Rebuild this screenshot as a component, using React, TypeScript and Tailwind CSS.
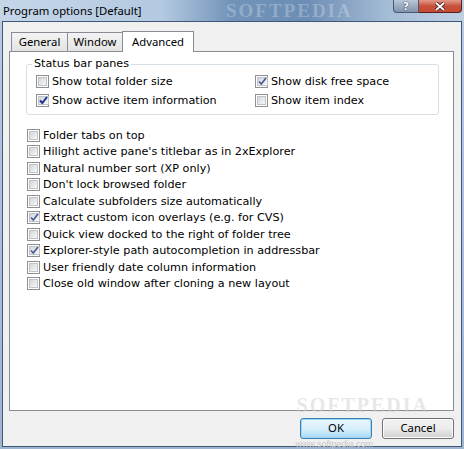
const mainFont = "font-['DejaVu_Sans',sans-serif]";

const Check = ({ checked, strong }: { checked?: boolean; strong?: boolean }) => {
  return (
    <span className="w-[13px] h-[13px] shrink-0 border border-[#8e8f8f] bg-white p-[1px] flex">
      <span className="flex-1 border border-[#c0c4ca] bg-gradient-to-br from-[#d3d6da] to-[#f8f8f8] flex items-center justify-center">
        {checked && (
          <svg width="9" height="9" viewBox="0 0 9 9">
            <path
              d="M1 4.5 L3.3 7 L8 1"
              fill="none"
              stroke={strong ? '#1f2f9a' : '#4a5c95'}
              strokeWidth={strong ? 2 : 1.7}
            />
          </svg>
        )}
      </span>
    </span>
  );
};

const Option = ({ label, checked, strong }: { label: string; checked?: boolean; strong?: boolean }) => {
  return (
    <div className="flex items-center gap-[3px] h-[16.5px]">
      <Check checked={checked} strong={strong} />
      <span className="text-[11.2px] leading-none text-black whitespace-nowrap">{label}</span>
    </div>
  );
};

const options = [
  { label: 'Folder tabs on top' },
  { label: "Hilight active pane's titlebar as in 2xExplorer" },
  { label: 'Natural number sort (XP only)' },
  { label: "Don't lock browsed folder" },
  { label: 'Calculate subfolders size automatically' },
  { label: 'Extract custom icon overlays (e.g. for CVS)', checked: true },
  { label: 'Quick view docked to the right of folder tree' },
  { label: 'Explorer-style path autocompletion in addressbar', checked: true },
  { label: 'User friendly date column information' },
  { label: 'Close old window after cloning a new layout' },
];

const App = () => {
  return (
    <div className="w-[464px] h-[449px] overflow-hidden flex flex-col bg-gradient-to-b from-[#b8cce2] to-[#9db5d0]">
      {/* title bar */}
      <div className="h-[21px] shrink-0 relative flex items-center pl-[3px] bg-[linear-gradient(to_right,#c5d6e9_0%,#b3c9e0_35%,#7193b9_50%,#6c8db4_66%,#a6bdd7_84%,#bfd0e3_100%)]">
        <span className="absolute left-[226px] top-[1px] text-[19px] leading-[19px] font-bold tracking-[2px] text-white/25 font-['Liberation_Serif',serif]">
          SOFTPEDIA
        </span>
        <span className="relative text-[11.3px] text-black font-['Noto_Sans',sans-serif] leading-none">
          Program options [Default]
        </span>
        <div className="absolute top-0 right-[2px] flex">
          <div className="w-[26px] h-[13px] rounded-bl-[4px] border border-t-0 border-[#4a5a6f] bg-gradient-to-b from-[#b9c7d8] to-[#7f94ad] flex items-center justify-center">
            <span className="text-[11px] font-bold leading-none text-white font-['DejaVu_Sans',sans-serif] [text-shadow:0_0_1px_#1c2a3c,0_0_1px_#1c2a3c]">?</span>
          </div>
          <div className="w-[43px] h-[13px] rounded-br-[4px] border border-t-0 border-l-0 border-[#5a2020] bg-gradient-to-b from-[#e29b8a] via-[#c7503c] to-[#c84a33] flex items-center justify-center">
            <svg width="12" height="9" viewBox="0 0 12 9">
              <path d="M2 1 L10 8 M10 1 L2 8" stroke="#3b1510" strokeWidth="3.6" />
              <path d="M2 1 L10 8 M10 1 L2 8" stroke="#ffffff" strokeWidth="2" />
            </svg>
          </div>
        </div>
      </div>

      {/* client area */}
      <div className={`flex-1 mx-[2px] mb-[2px] border border-[#3f5877] bg-[#f0f0f0] flex flex-col ${mainFont}`}>
        {/* tabs */}
        <div className="pt-[8px] pl-[8px] flex items-end h-[29px] font-['Noto_Sans',sans-serif] text-[11.3px]">
          <div className="h-[19px] w-[57px] border border-b-0 border-[#898c95] bg-gradient-to-b from-[#f3f3f3] to-[#e4e4e4] flex items-center justify-center">
            General
          </div>
          <div className="h-[19px] w-[55px] border border-b-0 border-l-0 border-[#898c95] bg-gradient-to-b from-[#f3f3f3] to-[#e4e4e4] flex items-center justify-center">
            Window
          </div>
          <div className="h-[21px] w-[72px] -ml-[1px] -mb-[1px] relative z-10 border border-b-0 border-[#898c95] bg-white flex items-start justify-center pt-[2px]">
            Advanced
          </div>
        </div>

        {/* panel */}
        <div className="ml-[6px] w-[445px] h-[360px] border border-[#898c95] bg-white pt-[12px]">
          <div className="relative ml-[16px] w-[413px] h-[51px] border border-[#d5dfe5] rounded-[3px] pt-[7px] pl-[9px]">
            <span className="absolute -top-[7px] left-[5px] px-[2px] bg-white text-[11.2px] leading-none">
              Status bar panes
            </span>
            <div className="grid grid-cols-[219px_1fr]">
              <div className="h-[19px] flex items-center">
                <Option label="Show total folder size" />
              </div>
              <div className="h-[19px] flex items-center">
                <Option label="Show disk free space" checked />
              </div>
              <div className="h-[19px] flex items-center">
                <Option label="Show active item information" checked strong />
              </div>
              <div className="h-[19px] flex items-center">
                <Option label="Show item index" />
              </div>
            </div>
          </div>

          <div className="ml-[17px] mt-[12px] flex flex-col">
            {options.map((o) => (
              <Option key={o.label} label={o.label} checked={o.checked} />
            ))}
          </div>
        </div>

        {/* buttons */}
        <div className="relative flex justify-end gap-[10px] pr-[7px] pt-[7px] font-['Noto_Sans',sans-serif] text-[11.3px]">
          <span className="absolute right-[32px] -top-[16px] text-[20px] font-bold tracking-[2px] text-[#d0d0d0]/50 font-['Liberation_Serif',serif] leading-none">
            SOFTPEDIA
          </span>
          <div className="relative w-[72px] h-[21px] rounded-[3px] border border-[#3c7fb1] bg-gradient-to-b from-[#eaf6fd] via-[#d9f0fc] to-[#a7d9f5] shadow-[inset_0_0_0_1px_#9ad6f5] flex items-center justify-center text-black">
            OK
          </div>
          <div className="relative w-[72px] h-[21px] rounded-[3px] border border-[#707070] bg-gradient-to-b from-[#f2f2f2] via-[#ebebeb] to-[#cfcfcf] shadow-[inset_0_0_0_1px_#fcfcfc] flex items-center justify-center text-black">
            Cancel
          </div>
          <span className="absolute right-[88px] top-[29px] text-[9px] leading-none text-[#c8c8c8] font-['Liberation_Sans',sans-serif]">
            www.softpedia.com
          </span>
        </div>
      </div>
    </div>
  );
};

export default App;
